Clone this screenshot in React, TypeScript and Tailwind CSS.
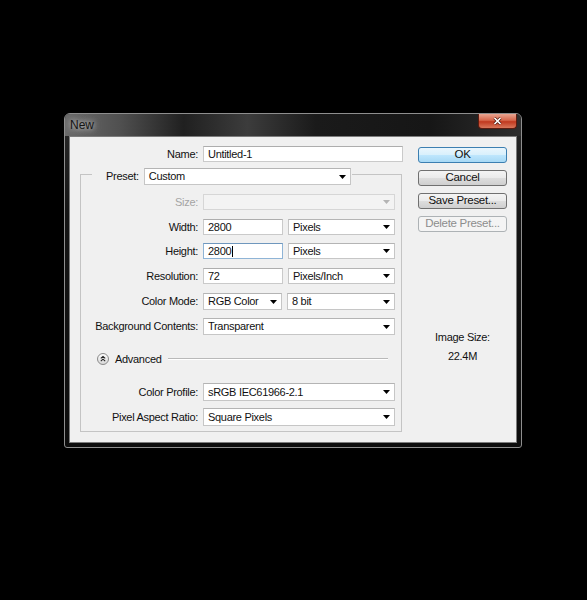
import type { ReactNode } from "react";

// Photoshop "New" document dialog on a Win7 aero frame.

function Arrow({ disabled }: { disabled?: boolean }) {
  return (
    <svg width="7" height="4" viewBox="0 0 7 4" className="shrink-0">
      <path d="M0 0H7L3.5 4Z" fill={disabled ? "#b4b4b4" : "#000"} />
    </svg>
  );
}

function Select({
  value,
  w,
  h = "h-[17px]",
  disabled,
}: {
  value?: string;
  w: string;
  h?: string;
  disabled?: boolean;
}) {
  return (
    <div
      className={`${w} ${h} flex items-center justify-between border pl-[4px] pr-[4px] ${
        disabled
          ? "border-[#d6d6d6] bg-[#f3f3f3]"
          : "border-[#c6c6c6] border-t-[#b4b4b4] bg-white"
      }`}
    >
      <span className="leading-none">{value}</span>
      <Arrow disabled={disabled} />
    </div>
  );
}

function Input({ value, w, focused }: { value: string; w: string; focused?: boolean }) {
  return (
    <div
      className={`${w} flex h-[16px] items-center border bg-white pl-[4px] ${
        focused ? "border-[#8fb4d6] border-t-[#6f97bd]" : "border-[#cacaca] border-t-[#adadad]"
      }`}
    >
      <span className="leading-none">{value}</span>
      {focused && <span className="ml-px h-[11px] w-px bg-black" />}
    </div>
  );
}

function Row({ label, children, className = "", muted }: { label: string; children: ReactNode; className?: string; muted?: boolean }) {
  return (
    <div className={`flex items-center gap-[5px] ${className}`}>
      <span className={`w-[117px] text-right leading-none ${muted ? "text-[#a4a4a4]" : ""}`}>{label}</span>
      {children}
    </div>
  );
}

function Btn({ label, kind = "normal" }: { label: string; kind?: "default" | "normal" | "disabled" }) {
  const styles = {
    default:
      "border-[#3c7fb1] bg-[linear-gradient(180deg,#eaf6fd_0%,#d9f0fc_48%,#bee6fd_52%,#a7d9f5_100%)]",
    normal:
      "border-[#707070] bg-[linear-gradient(180deg,#f4f4f4_0%,#ebebeb_48%,#dddddd_52%,#cfcfcf_100%)]",
    disabled: "border-[#adb2b5] bg-[#f4f4f4] text-[#8d8d8d]",
  }[kind];
  return (
    <div className={`flex h-[16px] w-[89px] items-center justify-center rounded-[3px] border text-[11.5px] leading-none ${styles}`}>
      {label}
    </div>
  );
}

function AdvancedIcon() {
  return (
    <svg width="12" height="12" viewBox="0 0 12 12" className="shrink-0">
      <defs>
        <linearGradient id="adv" x1="0" y1="0" x2="0" y2="1">
          <stop offset="0" stopColor="#ffffff" />
          <stop offset="1" stopColor="#d6d6d6" />
        </linearGradient>
      </defs>
      <circle cx="6" cy="6" r="5.5" fill="url(#adv)" stroke="#8a8a8a" />
      <path d="M3.8 5.4L6 3.4L8.2 5.4M3.8 8.2L6 6.2L8.2 8.2" fill="none" stroke="#222" strokeWidth="1.1" />
    </svg>
  );
}

export default function App() {
  return (
    <div className="h-[600px] w-[587px] overflow-hidden bg-black pl-[64px] pt-[113px] font-['Liberation_Sans',Arial,sans-serif] text-[11px] tracking-[-0.3px] text-[#111]">
      <div className="flex h-[335px] w-[458px] flex-col rounded-t-[6px] rounded-b-[3px] border border-[#8e8e8e] bg-[linear-gradient(180deg,#2a2a2a_0%,#141414_30%,#0c0c0c_100%)]">
        {/* title bar */}
        <div className="flex h-[22px] shrink-0 items-start justify-between rounded-t-[5px] bg-[linear-gradient(90deg,#6a6a6a_0%,#505050_12%,#202020_26%,#3c3c3c_40%,#1a1a1a_55%,#161616_80%,#2e2e2e_100%)] pl-[5px] pr-[4px]">
          <span className="mt-[5px] text-[12px] leading-none tracking-normal text-[#141414] [text-shadow:0_0_5px_#c8c8c8,0_0_9px_#b0b0b0]">New</span>
          <div className="flex h-[15px] w-[39px] items-center justify-center rounded-b-[4px] border border-t-0 border-[#5c1c10] bg-[linear-gradient(180deg,#e9a591_0%,#d5664b_45%,#c0391f_55%,#d8765a_100%)]">
            <svg width="9" height="8" viewBox="0 0 9 8">
              <path d="M1.5 1L7.5 7M7.5 1L1.5 7" stroke="#4a1208" strokeWidth="3" />
              <path d="M1.5 1L7.5 7M7.5 1L1.5 7" stroke="#fff" strokeWidth="1.7" />
            </svg>
          </div>
        </div>

        {/* client */}
        <div className="mx-[4px] flex h-[307px] border border-[#7c7c7c] bg-[#f0f0f0]">
          <div className="flex w-[334px] flex-col pl-[10px] pt-[9px]">
            <div className="flex items-center gap-[5px]">
              <span className="w-[118px] text-right leading-none">Name:</span>
              <Input value="Untitled-1" w="w-[200px]" />
            </div>

            {/* group box */}
            <div className="mt-[12px] flex h-[258px] w-[322px] flex-col border border-[#c4c4c4] pb-[4px]">
              <div className="-mt-[7px] ml-[11px] flex w-[260px] items-center gap-[5px] bg-[#f0f0f0] pl-[14px]">
                <span className="leading-none">Preset:</span>
                <Select value="Custom" w="w-[207px]" />
              </div>

              <Row label="Size:" muted className="mt-[9px]">
                <Select w="w-[192px]" h="h-[16px]" disabled />
              </Row>
              <Row label="Width:" className="mt-[9px]">
                <Input value="2800" w="w-[80px]" />
                <Select value="Pixels" w="w-[107px]" h="h-[16px]" />
              </Row>
              <Row label="Height:" className="mt-[8px]">
                <Input value="2800" w="w-[80px]" focused />
                <Select value="Pixels" w="w-[107px]" h="h-[16px]" />
              </Row>
              <Row label="Resolution:" className="mt-[9px]">
                <Input value="72" w="w-[80px]" />
                <Select value="Pixels/Inch" w="w-[107px]" h="h-[16px]" />
              </Row>
              <Row label="Color Mode:" className="mt-[9px]">
                <Select value="RGB Color" w="w-[79px]" />
                <Select value="8 bit" w="w-[108px]" />
              </Row>
              <Row label="Background Contents:" className="mt-[8px]">
                <Select value="Transparent" w="w-[192px]" />
              </Row>

              <div className="mr-[13px] mt-[18px] flex h-[12px] items-center">
                <div className="ml-[16px]">
                  <AdvancedIcon />
                </div>
                <span className="ml-[6px] leading-none">Advanced</span>
                <div className="ml-[6px] flex-1 border-t border-b border-t-[#b9b9b9] border-b-white" />
              </div>

              <Row label="Color Profile:" className="mt-[18px]">
                <Select value="sRGB IEC61966-2.1" w="w-[192px]" h="h-[18px]" />
              </Row>
              <Row label="Pixel Aspect Ratio:" className="mt-[7px]">
                <Select value="Square Pixels" w="w-[192px]" h="h-[18px]" />
              </Row>
            </div>
          </div>

          <div className="ml-[14px] flex w-[89px] flex-col pt-[10px]">
            <div className="flex flex-col gap-[7px]">
              <Btn label="OK" kind="default" />
              <Btn label="Cancel" />
              <Btn label="Save Preset..." />
              <Btn label="Delete Preset..." kind="disabled" />
            </div>
            <div className="mt-[100px] text-center leading-none">Image Size:</div>
            <div className="mt-[8px] text-center leading-none">22.4M</div>
          </div>
        </div>
      </div>
    </div>
  );
}
